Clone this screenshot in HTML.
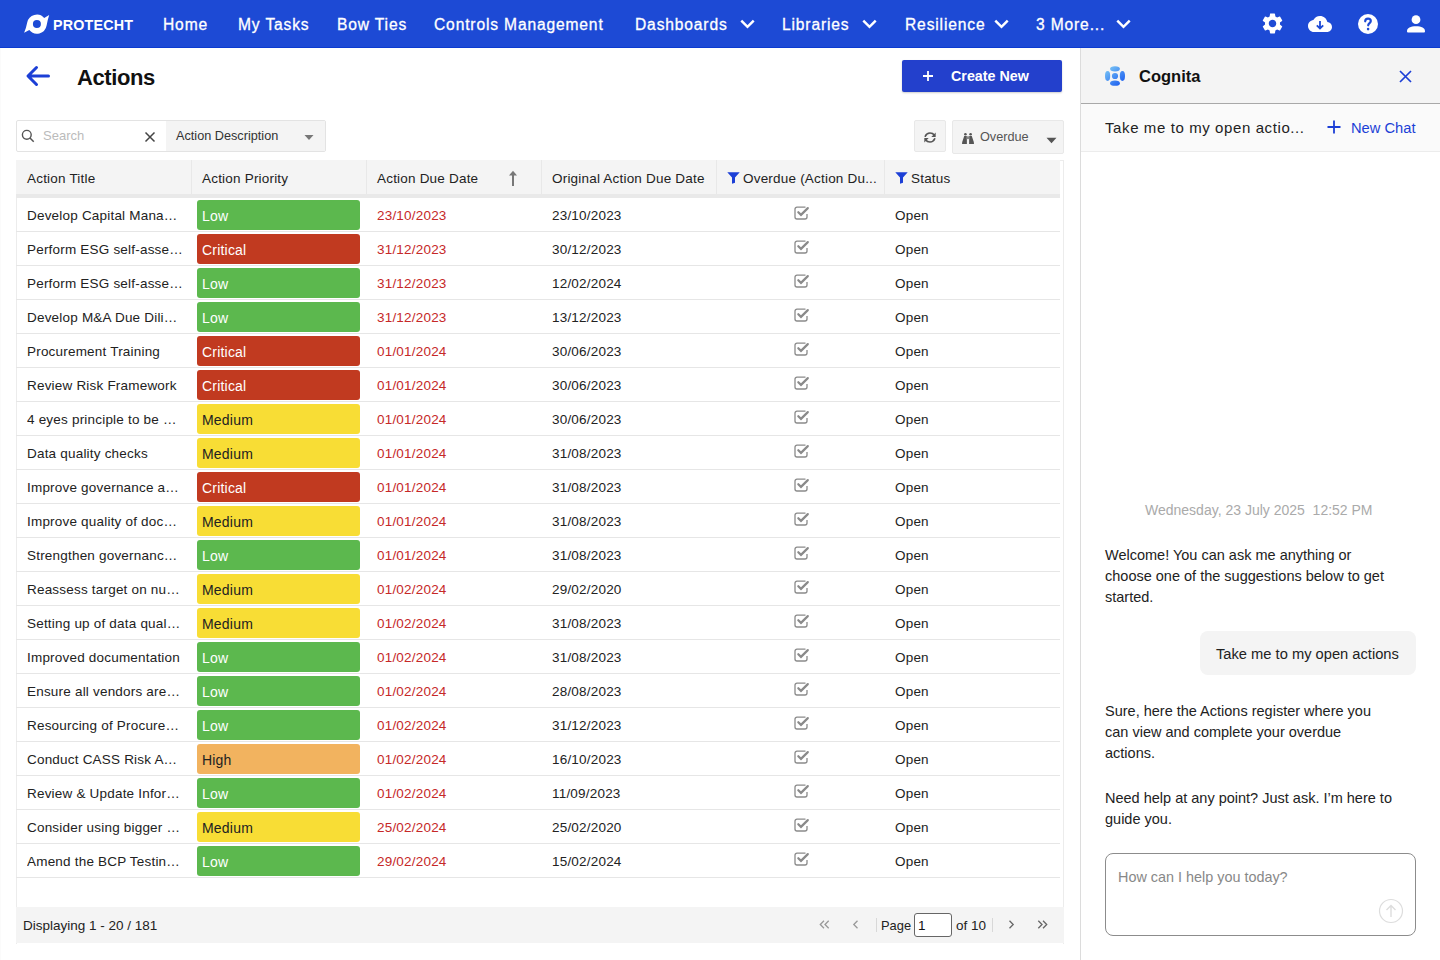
<!DOCTYPE html>
<html><head><meta charset="utf-8">
<style>
*{box-sizing:border-box;margin:0;padding:0}
html,body{width:1440px;height:960px;overflow:hidden;background:#fff;font-family:"Liberation Sans",sans-serif;color:#222}
.abs{position:absolute}
#nav{position:absolute;left:0;top:0;width:1440px;height:48px;background:#1d4ad5;border-bottom:1px solid #0b3bd0}
.nt{position:absolute;top:14px;color:#fff;font-size:15.6px;line-height:22px;letter-spacing:0.85px;white-space:nowrap;-webkit-text-stroke:0.3px #fff}
.chev{position:absolute;top:19px}
#main{position:absolute;left:0;top:48px;width:1080px;height:912px;background:#fff}
#chat{position:absolute;left:1080px;top:48px;width:360px;height:912px;background:#fff;border-left:1px solid #dcdcdc}
.t13{font-size:13.5px;line-height:16px;white-space:nowrap}
.row{position:absolute;left:16px;width:1044px;height:34px;border-bottom:1px solid #e6e6e6}
.cell{position:absolute;top:10px;font-size:13.5px;line-height:16px;white-space:nowrap;color:#222;letter-spacing:0.2px}
.badge{position:absolute;left:181px;top:2px;width:163px;height:30px;border-radius:3px;font-size:14px;line-height:30px;padding-left:5px;padding-top:1px;letter-spacing:0.2px;white-space:nowrap}
.low{background:#5cb84e;color:#fff}
.crit{background:#c13a20;color:#fff}
.med{background:#f8dd35;color:#222}
.high{background:#f2b35f;color:#222}
.red{color:#c62828}
.ttl{width:156px;overflow:hidden;text-overflow:ellipsis}
.chk{position:absolute;left:778px;top:8px}
.hdr{position:absolute;top:11px;font-size:13.5px;line-height:16px;white-space:nowrap;color:#222;letter-spacing:0.2px}
.sep{position:absolute;top:0;width:1px;height:34px;background:#e8e8e8}
.msg{position:absolute;left:1105px;font-size:14.5px;line-height:21px;color:#222;margin-top:1px}
</style></head>
<body>
<div id="nav">
  <!-- logo -->
  <svg class="abs" style="left:20px;top:10px" width="34" height="28" viewBox="0 0 34 28">
    <path fill="#fff" fill-rule="evenodd" d="M24.2 7.9 L29.2 5.1 Q27.6 10 26.6 15.6 A9.85 9.85 0 0 1 9.3 20.1 L4.1 22.7 Q6.2 17.8 7.2 12.4 A9.85 9.85 0 0 1 24.2 7.9 Z M20.9 14 A4 4 0 1 0 12.9 14 A4 4 0 1 0 20.9 14 Z"/>
  </svg>
  <div class="nt" style="left:53px;top:14px;font-size:14.3px;font-weight:700;letter-spacing:0.2px;-webkit-text-stroke:0;top:14px">PROTECHT</div>
  <div class="nt" style="left:163px">Home</div>
  <div class="nt" style="left:238px">My Tasks</div>
  <div class="nt" style="left:337px">Bow Ties</div>
  <div class="nt" style="left:434px">Controls Management</div>
  <div class="nt" style="left:635px">Dashboards</div>
  <svg class="chev" style="left:740px" width="15" height="11" viewBox="0 0 15 11"><path d="M1.3 1.6 L7.5 7.8 L13.7 1.6" stroke="#fff" stroke-width="2.5" fill="none"/></svg>
  <div class="nt" style="left:782px">Libraries</div>
  <svg class="chev" style="left:862px" width="15" height="11" viewBox="0 0 15 11"><path d="M1.3 1.6 L7.5 7.8 L13.7 1.6" stroke="#fff" stroke-width="2.5" fill="none"/></svg>
  <div class="nt" style="left:905px">Resilience</div>
  <svg class="chev" style="left:994px" width="15" height="11" viewBox="0 0 15 11"><path d="M1.3 1.6 L7.5 7.8 L13.7 1.6" stroke="#fff" stroke-width="2.5" fill="none"/></svg>
  <div class="nt" style="left:1036px">3 More...</div>
  <svg class="chev" style="left:1116px" width="15" height="11" viewBox="0 0 15 11"><path d="M1.3 1.6 L7.5 7.8 L13.7 1.6" stroke="#fff" stroke-width="2.5" fill="none"/></svg>
  <!-- icons -->
  <svg class="abs" style="left:1259.5px;top:11.4px" width="25" height="25" viewBox="0 0 24 24"><path fill="#fff" d="M19.14 12.94c.04-.3.06-.61.06-.94 0-.32-.02-.64-.07-.94l2.03-1.58a.49.49 0 0 0 .12-.61l-1.92-3.32a.488.488 0 0 0-.59-.22l-2.39.96c-.5-.38-1.03-.7-1.62-.94l-.36-2.54a.484.484 0 0 0-.48-.41h-3.84c-.24 0-.43.17-.47.41l-.36 2.54c-.59.24-1.13.57-1.62.94l-2.39-.96c-.22-.08-.47 0-.59.22L2.74 8.87c-.12.21-.08.47.12.61l2.03 1.58c-.05.3-.09.63-.09.94s.02.64.07.94l-2.03 1.58a.49.49 0 0 0-.12.61l1.92 3.32c.12.22.37.29.59.22l2.39-.96c.5.38 1.03.7 1.62.94l.36 2.54c.05.24.24.41.48.41h3.84c.24 0 .44-.17.47-.41l.36-2.54c.59-.24 1.13-.56 1.62-.94l2.39.96c.22.08.47 0 .59-.22l1.92-3.32c.12-.22.07-.47-.12-.61l-2.01-1.58zM12 15.6c-1.98 0-3.6-1.62-3.6-3.6s1.62-3.6 3.6-3.6 3.6 1.62 3.6 3.6-1.62 3.6-3.6 3.6z"/></svg>
  <svg class="abs" style="left:1307px;top:12px" width="26" height="24" viewBox="0 0 24 24"><path fill="#fff" d="M19.35 10.04C18.67 6.59 15.64 4 12 4 9.11 4 6.6 5.64 5.35 8.04 2.34 8.36 0 10.91 0 14c0 3.31 2.69 6 6 6h13c2.76 0 5-2.24 5-5 0-2.64-2.05-4.78-4.65-4.96z"/><path d="M12 9v7.3M8.8 13.3 12 16.5l3.2-3.2" stroke="#1d4ad5" stroke-width="1.8" fill="none"/></svg>
  <svg class="abs" style="left:1356px;top:12px" width="24" height="24" viewBox="0 0 24 24"><circle cx="12" cy="12" r="10" fill="#fff"/><path d="M9.2 9.3c0-1.6 1.2-2.7 2.8-2.7s2.8 1.1 2.8 2.5c0 1.9-2.6 2.1-2.6 4.2" stroke="#1d4ad5" stroke-width="2.2" fill="none" stroke-linecap="round"/><circle cx="12.1" cy="17.1" r="1.3" fill="#1d4ad5"/></svg>
  <svg class="abs" style="left:1404px;top:14px" width="24" height="20" viewBox="0 0 24 20"><circle cx="12" cy="5.7" r="4.4" fill="#fff"/><path fill="#fff" d="M3 17.2 C3 14 6.5 12.2 12 12.2 C17.5 12.2 21 14 21 17.2 V17.4 A1 1 0 0 1 20 18.4 H4 A1 1 0 0 1 3 17.4 Z"/></svg>
</div>

<div id="main"></div>
<div class="abs" style="left:0;top:48px;width:1px;height:912px;background:#fbfbfb"></div>

<!-- page title -->
<svg class="abs" style="left:25px;top:65px" width="26" height="22" viewBox="0 0 26 22"><path d="M23.5 11 H3.5 M11.5 2.5 L3 11 L11.5 19.5" stroke="#1c3fd6" stroke-width="3" fill="none" stroke-linecap="round" stroke-linejoin="round"/></svg>
<div class="abs" style="left:77px;top:64px;font-size:22px;line-height:28px;font-weight:700;letter-spacing:-0.4px;color:#111">Actions</div>
<div class="abs" style="left:902px;top:60px;width:160px;height:32px;background:#2340cc;border-radius:2px;box-shadow:0 1px 2px rgba(0,0,0,.2)">
  <svg class="abs" style="left:20px;top:10px" width="12" height="12" viewBox="0 0 12 12"><path d="M6 1V11M1 6H11" stroke="#fff" stroke-width="1.8"/></svg>
  <div class="abs" style="left:49px;top:7px;color:#fff;font-size:14.3px;line-height:18px;font-weight:700;white-space:nowrap">Create New</div>
</div>

<!-- toolbar -->
<div class="abs" style="left:16px;top:120px;width:310px;height:32px;border:1px solid #e3e3e3;border-radius:2px;background:#fff"></div>
<div class="abs" style="left:166px;top:121px;width:159px;height:30px;background:#f4f4f4"></div>
<svg class="abs" style="left:21px;top:129px" width="14" height="14" viewBox="0 0 14 14"><circle cx="5.8" cy="5.8" r="4.4" stroke="#555" stroke-width="1.4" fill="none"/><path d="M9 9L12.7 12.7" stroke="#555" stroke-width="1.5"/></svg>
<div class="abs t13" style="left:43px;top:128px;color:#bbb;font-size:13px">Search</div>
<svg class="abs" style="left:144px;top:131px" width="12" height="12" viewBox="0 0 12 12"><path d="M1.5 1.5L10.5 10.5M10.5 1.5L1.5 10.5" stroke="#444" stroke-width="1.5"/></svg>
<div class="abs t13" style="left:176px;top:128px;font-size:12.7px;color:#333">Action Description</div>
<svg class="abs" style="left:304px;top:134px" width="10" height="7" viewBox="0 0 10 7"><path d="M0.5 1H9.5L5 6Z" fill="#777"/></svg>

<div class="abs" style="left:914px;top:120px;width:32px;height:32px;background:#f4f4f4;border:1px solid #e8e8e8;border-radius:2px"></div>
<svg class="abs" style="left:923px;top:131px" width="14" height="13" viewBox="0 0 14 13"><path d="M2.3 5.2 C3.2 3 5 2 7 2 C9 2 10.4 2.8 11.2 4" stroke="#555" stroke-width="1.7" fill="none" stroke-linecap="round"/><path d="M12.7 1.6 V6 H8.3 Z" fill="#555"/><path d="M11.7 7.8 C10.8 10 9 11 7 11 C5 11 3.6 10.2 2.8 9" stroke="#555" stroke-width="1.7" fill="none" stroke-linecap="round"/><path d="M1.3 11.4 V7 H5.7 Z" fill="#555"/></svg>
<div class="abs" style="left:952px;top:120px;width:112px;height:34px;background:#f4f4f4;border:1px solid #e8e8e8;border-radius:2px"></div>
<svg class="abs" style="left:961px;top:132px" width="14" height="13" viewBox="0 0 14 13"><circle cx="4.4" cy="2.3" r="1.3" fill="#555"/><circle cx="9.6" cy="2.3" r="1.3" fill="#555"/><path d="M3.2 4 H5.8 L5.9 12 H1 L1.2 10 Z" fill="#555"/><path d="M8.2 4 H10.8 L12.8 10 L13 12 H8.1 Z" fill="#555"/><rect x="5.8" y="4.3" width="2.4" height="2.8" fill="#888"/></svg>
<div class="abs t13" style="left:980px;top:129px;font-size:12.7px;color:#555">Overdue</div>
<svg class="abs" style="left:1046px;top:137px" width="11" height="7" viewBox="0 0 11 7"><path d="M0.5 0.8H10.5L5.5 6.2Z" fill="#555"/></svg>

<!-- table -->
<div class="abs" style="left:16px;top:160px;width:1048px;height:784px;border:1px solid #ececec;border-bottom:none"></div>
<div class="abs" style="left:16px;top:160px;width:1044px;height:34px;background:#f4f4f4"></div>
<div class="abs" style="left:16px;top:194px;width:1044px;height:4px;background:#e9e9e9"></div>
<div class="sep" style="left:191px;top:160px"></div>
<div class="sep" style="left:366px;top:160px"></div>
<div class="sep" style="left:541px;top:160px"></div>
<div class="sep" style="left:716px;top:160px"></div>
<div class="sep" style="left:884px;top:160px"></div>
<div class="hdr" style="left:27px;top:171px">Action Title</div>
<div class="hdr" style="left:202px;top:171px">Action Priority</div>
<div class="hdr" style="left:377px;top:171px">Action Due Date</div>
<svg class="abs" style="left:508px;top:170px" width="10" height="17" viewBox="0 0 10 17"><path d="M5 16V3" stroke="#777" stroke-width="2"/><path d="M1 5.5L5 0.8L9 5.5Z" fill="#777"/></svg>
<div class="hdr" style="left:552px;top:171px">Original Action Due Date</div>
<svg class="abs" style="left:727px;top:172px" width="13" height="12" viewBox="0 0 13 12"><path d="M0.3 0.3H12.7L8 5.5V10.8L5 11.7V5.5Z" fill="#1c3fd6"/></svg>
<div class="hdr" style="left:743px;top:171px">Overdue (Action Du...</div>
<svg class="abs" style="left:895px;top:172px" width="13" height="12" viewBox="0 0 13 12"><path d="M0.3 0.3H12.7L8 5.5V10.8L5 11.7V5.5Z" fill="#1c3fd6"/></svg>
<div class="hdr" style="left:911px;top:171px">Status</div>

<div id="rows"><div class="row" style="top:198px"><div class="cell ttl" style="left:11px">Develop Capital Management Plan</div><div class="badge low">Low</div><div class="cell red" style="left:361px">23/10/2023</div><div class="cell" style="left:536px">23/10/2023</div><svg class="chk" width="16" height="14" viewBox="0 0 16 14"><path d="M11.5 1.2H3A2 2 0 0 0 1 3.2V11a2 2 0 0 0 2 2h8a2 2 0 0 0 2-2V8" stroke="#8a8a8a" stroke-width="1.3" fill="none"/><path d="M4.3 6.2L7 8.9L13.8 2.1" stroke="#8a8a8a" stroke-width="2.2" fill="none" stroke-linecap="round"/></svg><div class="cell" style="left:879px">Open</div></div><div class="row" style="top:232px"><div class="cell ttl" style="left:11px">Perform ESG self-assessment</div><div class="badge crit">Critical</div><div class="cell red" style="left:361px">31/12/2023</div><div class="cell" style="left:536px">30/12/2023</div><svg class="chk" width="16" height="14" viewBox="0 0 16 14"><path d="M11.5 1.2H3A2 2 0 0 0 1 3.2V11a2 2 0 0 0 2 2h8a2 2 0 0 0 2-2V8" stroke="#8a8a8a" stroke-width="1.3" fill="none"/><path d="M4.3 6.2L7 8.9L13.8 2.1" stroke="#8a8a8a" stroke-width="2.2" fill="none" stroke-linecap="round"/></svg><div class="cell" style="left:879px">Open</div></div><div class="row" style="top:266px"><div class="cell ttl" style="left:11px">Perform ESG self-assessment</div><div class="badge low">Low</div><div class="cell red" style="left:361px">31/12/2023</div><div class="cell" style="left:536px">12/02/2024</div><svg class="chk" width="16" height="14" viewBox="0 0 16 14"><path d="M11.5 1.2H3A2 2 0 0 0 1 3.2V11a2 2 0 0 0 2 2h8a2 2 0 0 0 2-2V8" stroke="#8a8a8a" stroke-width="1.3" fill="none"/><path d="M4.3 6.2L7 8.9L13.8 2.1" stroke="#8a8a8a" stroke-width="2.2" fill="none" stroke-linecap="round"/></svg><div class="cell" style="left:879px">Open</div></div><div class="row" style="top:300px"><div class="cell ttl" style="left:11px">Develop M&amp;A Due Diligence</div><div class="badge low">Low</div><div class="cell red" style="left:361px">31/12/2023</div><div class="cell" style="left:536px">13/12/2023</div><svg class="chk" width="16" height="14" viewBox="0 0 16 14"><path d="M11.5 1.2H3A2 2 0 0 0 1 3.2V11a2 2 0 0 0 2 2h8a2 2 0 0 0 2-2V8" stroke="#8a8a8a" stroke-width="1.3" fill="none"/><path d="M4.3 6.2L7 8.9L13.8 2.1" stroke="#8a8a8a" stroke-width="2.2" fill="none" stroke-linecap="round"/></svg><div class="cell" style="left:879px">Open</div></div><div class="row" style="top:334px"><div class="cell ttl" style="left:11px">Procurement Training</div><div class="badge crit">Critical</div><div class="cell red" style="left:361px">01/01/2024</div><div class="cell" style="left:536px">30/06/2023</div><svg class="chk" width="16" height="14" viewBox="0 0 16 14"><path d="M11.5 1.2H3A2 2 0 0 0 1 3.2V11a2 2 0 0 0 2 2h8a2 2 0 0 0 2-2V8" stroke="#8a8a8a" stroke-width="1.3" fill="none"/><path d="M4.3 6.2L7 8.9L13.8 2.1" stroke="#8a8a8a" stroke-width="2.2" fill="none" stroke-linecap="round"/></svg><div class="cell" style="left:879px">Open</div></div><div class="row" style="top:368px"><div class="cell ttl" style="left:11px">Review Risk Framework</div><div class="badge crit">Critical</div><div class="cell red" style="left:361px">01/01/2024</div><div class="cell" style="left:536px">30/06/2023</div><svg class="chk" width="16" height="14" viewBox="0 0 16 14"><path d="M11.5 1.2H3A2 2 0 0 0 1 3.2V11a2 2 0 0 0 2 2h8a2 2 0 0 0 2-2V8" stroke="#8a8a8a" stroke-width="1.3" fill="none"/><path d="M4.3 6.2L7 8.9L13.8 2.1" stroke="#8a8a8a" stroke-width="2.2" fill="none" stroke-linecap="round"/></svg><div class="cell" style="left:879px">Open</div></div><div class="row" style="top:402px"><div class="cell ttl" style="left:11px">4 eyes principle to be applied</div><div class="badge med">Medium</div><div class="cell red" style="left:361px">01/01/2024</div><div class="cell" style="left:536px">30/06/2023</div><svg class="chk" width="16" height="14" viewBox="0 0 16 14"><path d="M11.5 1.2H3A2 2 0 0 0 1 3.2V11a2 2 0 0 0 2 2h8a2 2 0 0 0 2-2V8" stroke="#8a8a8a" stroke-width="1.3" fill="none"/><path d="M4.3 6.2L7 8.9L13.8 2.1" stroke="#8a8a8a" stroke-width="2.2" fill="none" stroke-linecap="round"/></svg><div class="cell" style="left:879px">Open</div></div><div class="row" style="top:436px"><div class="cell ttl" style="left:11px">Data quality checks</div><div class="badge med">Medium</div><div class="cell red" style="left:361px">01/01/2024</div><div class="cell" style="left:536px">31/08/2023</div><svg class="chk" width="16" height="14" viewBox="0 0 16 14"><path d="M11.5 1.2H3A2 2 0 0 0 1 3.2V11a2 2 0 0 0 2 2h8a2 2 0 0 0 2-2V8" stroke="#8a8a8a" stroke-width="1.3" fill="none"/><path d="M4.3 6.2L7 8.9L13.8 2.1" stroke="#8a8a8a" stroke-width="2.2" fill="none" stroke-linecap="round"/></svg><div class="cell" style="left:879px">Open</div></div><div class="row" style="top:470px"><div class="cell ttl" style="left:11px">Improve governance around</div><div class="badge crit">Critical</div><div class="cell red" style="left:361px">01/01/2024</div><div class="cell" style="left:536px">31/08/2023</div><svg class="chk" width="16" height="14" viewBox="0 0 16 14"><path d="M11.5 1.2H3A2 2 0 0 0 1 3.2V11a2 2 0 0 0 2 2h8a2 2 0 0 0 2-2V8" stroke="#8a8a8a" stroke-width="1.3" fill="none"/><path d="M4.3 6.2L7 8.9L13.8 2.1" stroke="#8a8a8a" stroke-width="2.2" fill="none" stroke-linecap="round"/></svg><div class="cell" style="left:879px">Open</div></div><div class="row" style="top:504px"><div class="cell ttl" style="left:11px">Improve quality of documentation</div><div class="badge med">Medium</div><div class="cell red" style="left:361px">01/01/2024</div><div class="cell" style="left:536px">31/08/2023</div><svg class="chk" width="16" height="14" viewBox="0 0 16 14"><path d="M11.5 1.2H3A2 2 0 0 0 1 3.2V11a2 2 0 0 0 2 2h8a2 2 0 0 0 2-2V8" stroke="#8a8a8a" stroke-width="1.3" fill="none"/><path d="M4.3 6.2L7 8.9L13.8 2.1" stroke="#8a8a8a" stroke-width="2.2" fill="none" stroke-linecap="round"/></svg><div class="cell" style="left:879px">Open</div></div><div class="row" style="top:538px"><div class="cell ttl" style="left:11px">Strengthen governance of</div><div class="badge low">Low</div><div class="cell red" style="left:361px">01/01/2024</div><div class="cell" style="left:536px">31/08/2023</div><svg class="chk" width="16" height="14" viewBox="0 0 16 14"><path d="M11.5 1.2H3A2 2 0 0 0 1 3.2V11a2 2 0 0 0 2 2h8a2 2 0 0 0 2-2V8" stroke="#8a8a8a" stroke-width="1.3" fill="none"/><path d="M4.3 6.2L7 8.9L13.8 2.1" stroke="#8a8a8a" stroke-width="2.2" fill="none" stroke-linecap="round"/></svg><div class="cell" style="left:879px">Open</div></div><div class="row" style="top:572px"><div class="cell ttl" style="left:11px">Reassess target on number</div><div class="badge med">Medium</div><div class="cell red" style="left:361px">01/02/2024</div><div class="cell" style="left:536px">29/02/2020</div><svg class="chk" width="16" height="14" viewBox="0 0 16 14"><path d="M11.5 1.2H3A2 2 0 0 0 1 3.2V11a2 2 0 0 0 2 2h8a2 2 0 0 0 2-2V8" stroke="#8a8a8a" stroke-width="1.3" fill="none"/><path d="M4.3 6.2L7 8.9L13.8 2.1" stroke="#8a8a8a" stroke-width="2.2" fill="none" stroke-linecap="round"/></svg><div class="cell" style="left:879px">Open</div></div><div class="row" style="top:606px"><div class="cell ttl" style="left:11px">Setting up of data quality checks</div><div class="badge med">Medium</div><div class="cell red" style="left:361px">01/02/2024</div><div class="cell" style="left:536px">31/08/2023</div><svg class="chk" width="16" height="14" viewBox="0 0 16 14"><path d="M11.5 1.2H3A2 2 0 0 0 1 3.2V11a2 2 0 0 0 2 2h8a2 2 0 0 0 2-2V8" stroke="#8a8a8a" stroke-width="1.3" fill="none"/><path d="M4.3 6.2L7 8.9L13.8 2.1" stroke="#8a8a8a" stroke-width="2.2" fill="none" stroke-linecap="round"/></svg><div class="cell" style="left:879px">Open</div></div><div class="row" style="top:640px"><div class="cell ttl" style="left:11px">Improved documentation</div><div class="badge low">Low</div><div class="cell red" style="left:361px">01/02/2024</div><div class="cell" style="left:536px">31/08/2023</div><svg class="chk" width="16" height="14" viewBox="0 0 16 14"><path d="M11.5 1.2H3A2 2 0 0 0 1 3.2V11a2 2 0 0 0 2 2h8a2 2 0 0 0 2-2V8" stroke="#8a8a8a" stroke-width="1.3" fill="none"/><path d="M4.3 6.2L7 8.9L13.8 2.1" stroke="#8a8a8a" stroke-width="2.2" fill="none" stroke-linecap="round"/></svg><div class="cell" style="left:879px">Open</div></div><div class="row" style="top:674px"><div class="cell ttl" style="left:11px">Ensure all vendors are assessed</div><div class="badge low">Low</div><div class="cell red" style="left:361px">01/02/2024</div><div class="cell" style="left:536px">28/08/2023</div><svg class="chk" width="16" height="14" viewBox="0 0 16 14"><path d="M11.5 1.2H3A2 2 0 0 0 1 3.2V11a2 2 0 0 0 2 2h8a2 2 0 0 0 2-2V8" stroke="#8a8a8a" stroke-width="1.3" fill="none"/><path d="M4.3 6.2L7 8.9L13.8 2.1" stroke="#8a8a8a" stroke-width="2.2" fill="none" stroke-linecap="round"/></svg><div class="cell" style="left:879px">Open</div></div><div class="row" style="top:708px"><div class="cell ttl" style="left:11px">Resourcing of Procurement</div><div class="badge low">Low</div><div class="cell red" style="left:361px">01/02/2024</div><div class="cell" style="left:536px">31/12/2023</div><svg class="chk" width="16" height="14" viewBox="0 0 16 14"><path d="M11.5 1.2H3A2 2 0 0 0 1 3.2V11a2 2 0 0 0 2 2h8a2 2 0 0 0 2-2V8" stroke="#8a8a8a" stroke-width="1.3" fill="none"/><path d="M4.3 6.2L7 8.9L13.8 2.1" stroke="#8a8a8a" stroke-width="2.2" fill="none" stroke-linecap="round"/></svg><div class="cell" style="left:879px">Open</div></div><div class="row" style="top:742px"><div class="cell ttl" style="left:11px">Conduct CASS Risk Assessment</div><div class="badge high">High</div><div class="cell red" style="left:361px">01/02/2024</div><div class="cell" style="left:536px">16/10/2023</div><svg class="chk" width="16" height="14" viewBox="0 0 16 14"><path d="M11.5 1.2H3A2 2 0 0 0 1 3.2V11a2 2 0 0 0 2 2h8a2 2 0 0 0 2-2V8" stroke="#8a8a8a" stroke-width="1.3" fill="none"/><path d="M4.3 6.2L7 8.9L13.8 2.1" stroke="#8a8a8a" stroke-width="2.2" fill="none" stroke-linecap="round"/></svg><div class="cell" style="left:879px">Open</div></div><div class="row" style="top:776px"><div class="cell ttl" style="left:11px">Review &amp; Update Information</div><div class="badge low">Low</div><div class="cell red" style="left:361px">01/02/2024</div><div class="cell" style="left:536px">11/09/2023</div><svg class="chk" width="16" height="14" viewBox="0 0 16 14"><path d="M11.5 1.2H3A2 2 0 0 0 1 3.2V11a2 2 0 0 0 2 2h8a2 2 0 0 0 2-2V8" stroke="#8a8a8a" stroke-width="1.3" fill="none"/><path d="M4.3 6.2L7 8.9L13.8 2.1" stroke="#8a8a8a" stroke-width="2.2" fill="none" stroke-linecap="round"/></svg><div class="cell" style="left:879px">Open</div></div><div class="row" style="top:810px"><div class="cell ttl" style="left:11px">Consider using bigger budget</div><div class="badge med">Medium</div><div class="cell red" style="left:361px">25/02/2024</div><div class="cell" style="left:536px">25/02/2020</div><svg class="chk" width="16" height="14" viewBox="0 0 16 14"><path d="M11.5 1.2H3A2 2 0 0 0 1 3.2V11a2 2 0 0 0 2 2h8a2 2 0 0 0 2-2V8" stroke="#8a8a8a" stroke-width="1.3" fill="none"/><path d="M4.3 6.2L7 8.9L13.8 2.1" stroke="#8a8a8a" stroke-width="2.2" fill="none" stroke-linecap="round"/></svg><div class="cell" style="left:879px">Open</div></div><div class="row" style="top:844px"><div class="cell ttl" style="left:11px">Amend the BCP Testing schedule</div><div class="badge low">Low</div><div class="cell red" style="left:361px">29/02/2024</div><div class="cell" style="left:536px">15/02/2024</div><svg class="chk" width="16" height="14" viewBox="0 0 16 14"><path d="M11.5 1.2H3A2 2 0 0 0 1 3.2V11a2 2 0 0 0 2 2h8a2 2 0 0 0 2-2V8" stroke="#8a8a8a" stroke-width="1.3" fill="none"/><path d="M4.3 6.2L7 8.9L13.8 2.1" stroke="#8a8a8a" stroke-width="2.2" fill="none" stroke-linecap="round"/></svg><div class="cell" style="left:879px">Open</div></div></div><!--endrows-->

<!-- footer -->
<div class="abs" style="left:16px;top:907px;width:1048px;height:36px;background:#f4f4f4"></div>
<div class="abs t13" style="left:23px;top:918px;color:#222">Displaying 1 - 20 / 181</div>
<svg class="abs" style="left:819px;top:920px" width="11" height="9" viewBox="0 0 11 9"><path d="M5 0.8L1.3 4.5L5 8.2M9.7 0.8L6 4.5L9.7 8.2" stroke="#999" stroke-width="1.3" fill="none"/></svg>
<svg class="abs" style="left:852px;top:920px" width="7" height="9" viewBox="0 0 7 9"><path d="M5.5 0.8L1.8 4.5L5.5 8.2" stroke="#999" stroke-width="1.3" fill="none"/></svg>
<div class="abs" style="left:876px;top:918px;width:1px;height:14px;background:#d8d8d8"></div>
<div class="abs t13" style="left:881px;top:918px;color:#222;font-size:12.9px">Page</div>
<div class="abs" style="left:914px;top:913px;width:38px;height:24px;border:1px solid #666;border-radius:3px;background:#fff"></div>
<div class="abs t13" style="left:918px;top:918px;color:#111">1</div>
<div class="abs t13" style="left:956px;top:918px;color:#222">of 10</div>
<div class="abs" style="left:992px;top:918px;width:1px;height:14px;background:#d8d8d8"></div>
<svg class="abs" style="left:1008px;top:920px" width="7" height="9" viewBox="0 0 7 9"><path d="M1.5 0.8L5.2 4.5L1.5 8.2" stroke="#666" stroke-width="1.3" fill="none"/></svg>
<svg class="abs" style="left:1037px;top:920px" width="11" height="9" viewBox="0 0 11 9"><path d="M1.3 0.8L5 4.5L1.3 8.2M6 0.8L9.7 4.5L6 8.2" stroke="#666" stroke-width="1.3" fill="none"/></svg>

<!-- chat -->
<div id="chat"></div>
<div class="abs" style="left:1081px;top:48px;width:359px;height:56px;background:#f4f4f4;border-bottom:1px solid #a8a8a8"></div>
<svg class="abs" style="left:1105px;top:66px" width="20" height="20" viewBox="0 0 20 20">
<defs><linearGradient id="cg" gradientUnits="userSpaceOnUse" x1="2" y1="1" x2="17" y2="19"><stop offset="0" stop-color="#7cc8f5"/><stop offset="1" stop-color="#1a5cf0"/></linearGradient></defs>
<ellipse cx="10" cy="2.8" rx="4.9" ry="2.6" fill="url(#cg)"/><ellipse cx="10" cy="17.2" rx="4.9" ry="2.6" fill="url(#cg)"/>
<ellipse cx="2.6" cy="10" rx="2.6" ry="4.9" fill="url(#cg)"/><ellipse cx="17.4" cy="10" rx="2.6" ry="4.9" fill="url(#cg)"/>
<circle cx="10" cy="10" r="3.1" fill="url(#cg)"/></svg>
<div class="abs" style="left:1139px;top:66px;font-size:16.5px;line-height:20px;font-weight:700;color:#111">Cognita</div>
<svg class="abs" style="left:1399px;top:70px" width="13" height="13" viewBox="0 0 13 13"><path d="M1 1L12 12M12 1L1 12" stroke="#1c3fd6" stroke-width="1.7"/></svg>
<div class="abs" style="left:1081px;top:104px;width:359px;height:48px;background:#fafafa;border-bottom:1px solid #ececec"></div>
<div class="abs" style="left:1105px;top:118px;font-size:15px;line-height:20px;color:#222;white-space:nowrap;letter-spacing:0.6px">Take me to my open actio...</div>
<svg class="abs" style="left:1327px;top:120px" width="14" height="14" viewBox="0 0 14 14"><path d="M7 0.5V13.5M0.5 7H13.5" stroke="#1c3fd6" stroke-width="1.8"/></svg>
<div class="abs" style="left:1351px;top:118px;font-size:14.7px;line-height:20px;color:#1c3fd6;white-space:nowrap">New Chat</div>
<div class="abs" style="left:1145px;top:500px;font-size:14px;line-height:20px;color:#aaa;white-space:pre">Wednesday, 23 July 2025  12:52 PM</div>
<div class="msg" style="top:544px;width:300px">Welcome! You can ask me anything or<br>choose one of the suggestions below to get<br>started.</div>
<div class="abs" style="left:1200px;top:631px;width:216px;height:44px;background:#f4f4f4;border-radius:8px"></div>
<div class="abs" style="left:1216px;top:644px;font-size:14.7px;line-height:20px;color:#222;white-space:nowrap">Take me to my open actions</div>
<div class="msg" style="top:700px;width:300px">Sure, here the Actions register where you<br>can view and complete your overdue<br>actions.</div>
<div class="msg" style="top:787px;width:320px">Need help at any point? Just ask. I&#8217;m here to<br>guide you.</div>
<div class="abs" style="left:1105px;top:853px;width:311px;height:83px;border:1px solid #8c8c8c;border-radius:8px;background:#fff"></div>
<div class="abs" style="left:1118px;top:867px;font-size:14.4px;line-height:20px;color:#888;white-space:nowrap">How can I help you today?</div>
<svg class="abs" style="left:1378px;top:898px" width="26" height="26" viewBox="0 0 26 26"><circle cx="13" cy="13" r="11.5" stroke="#ddd" stroke-width="1.2" fill="none"/><path d="M13 19V7.5M8.5 12L13 7.5L17.5 12" stroke="#ddd" stroke-width="1.4" fill="none"/></svg>
</body></html>
